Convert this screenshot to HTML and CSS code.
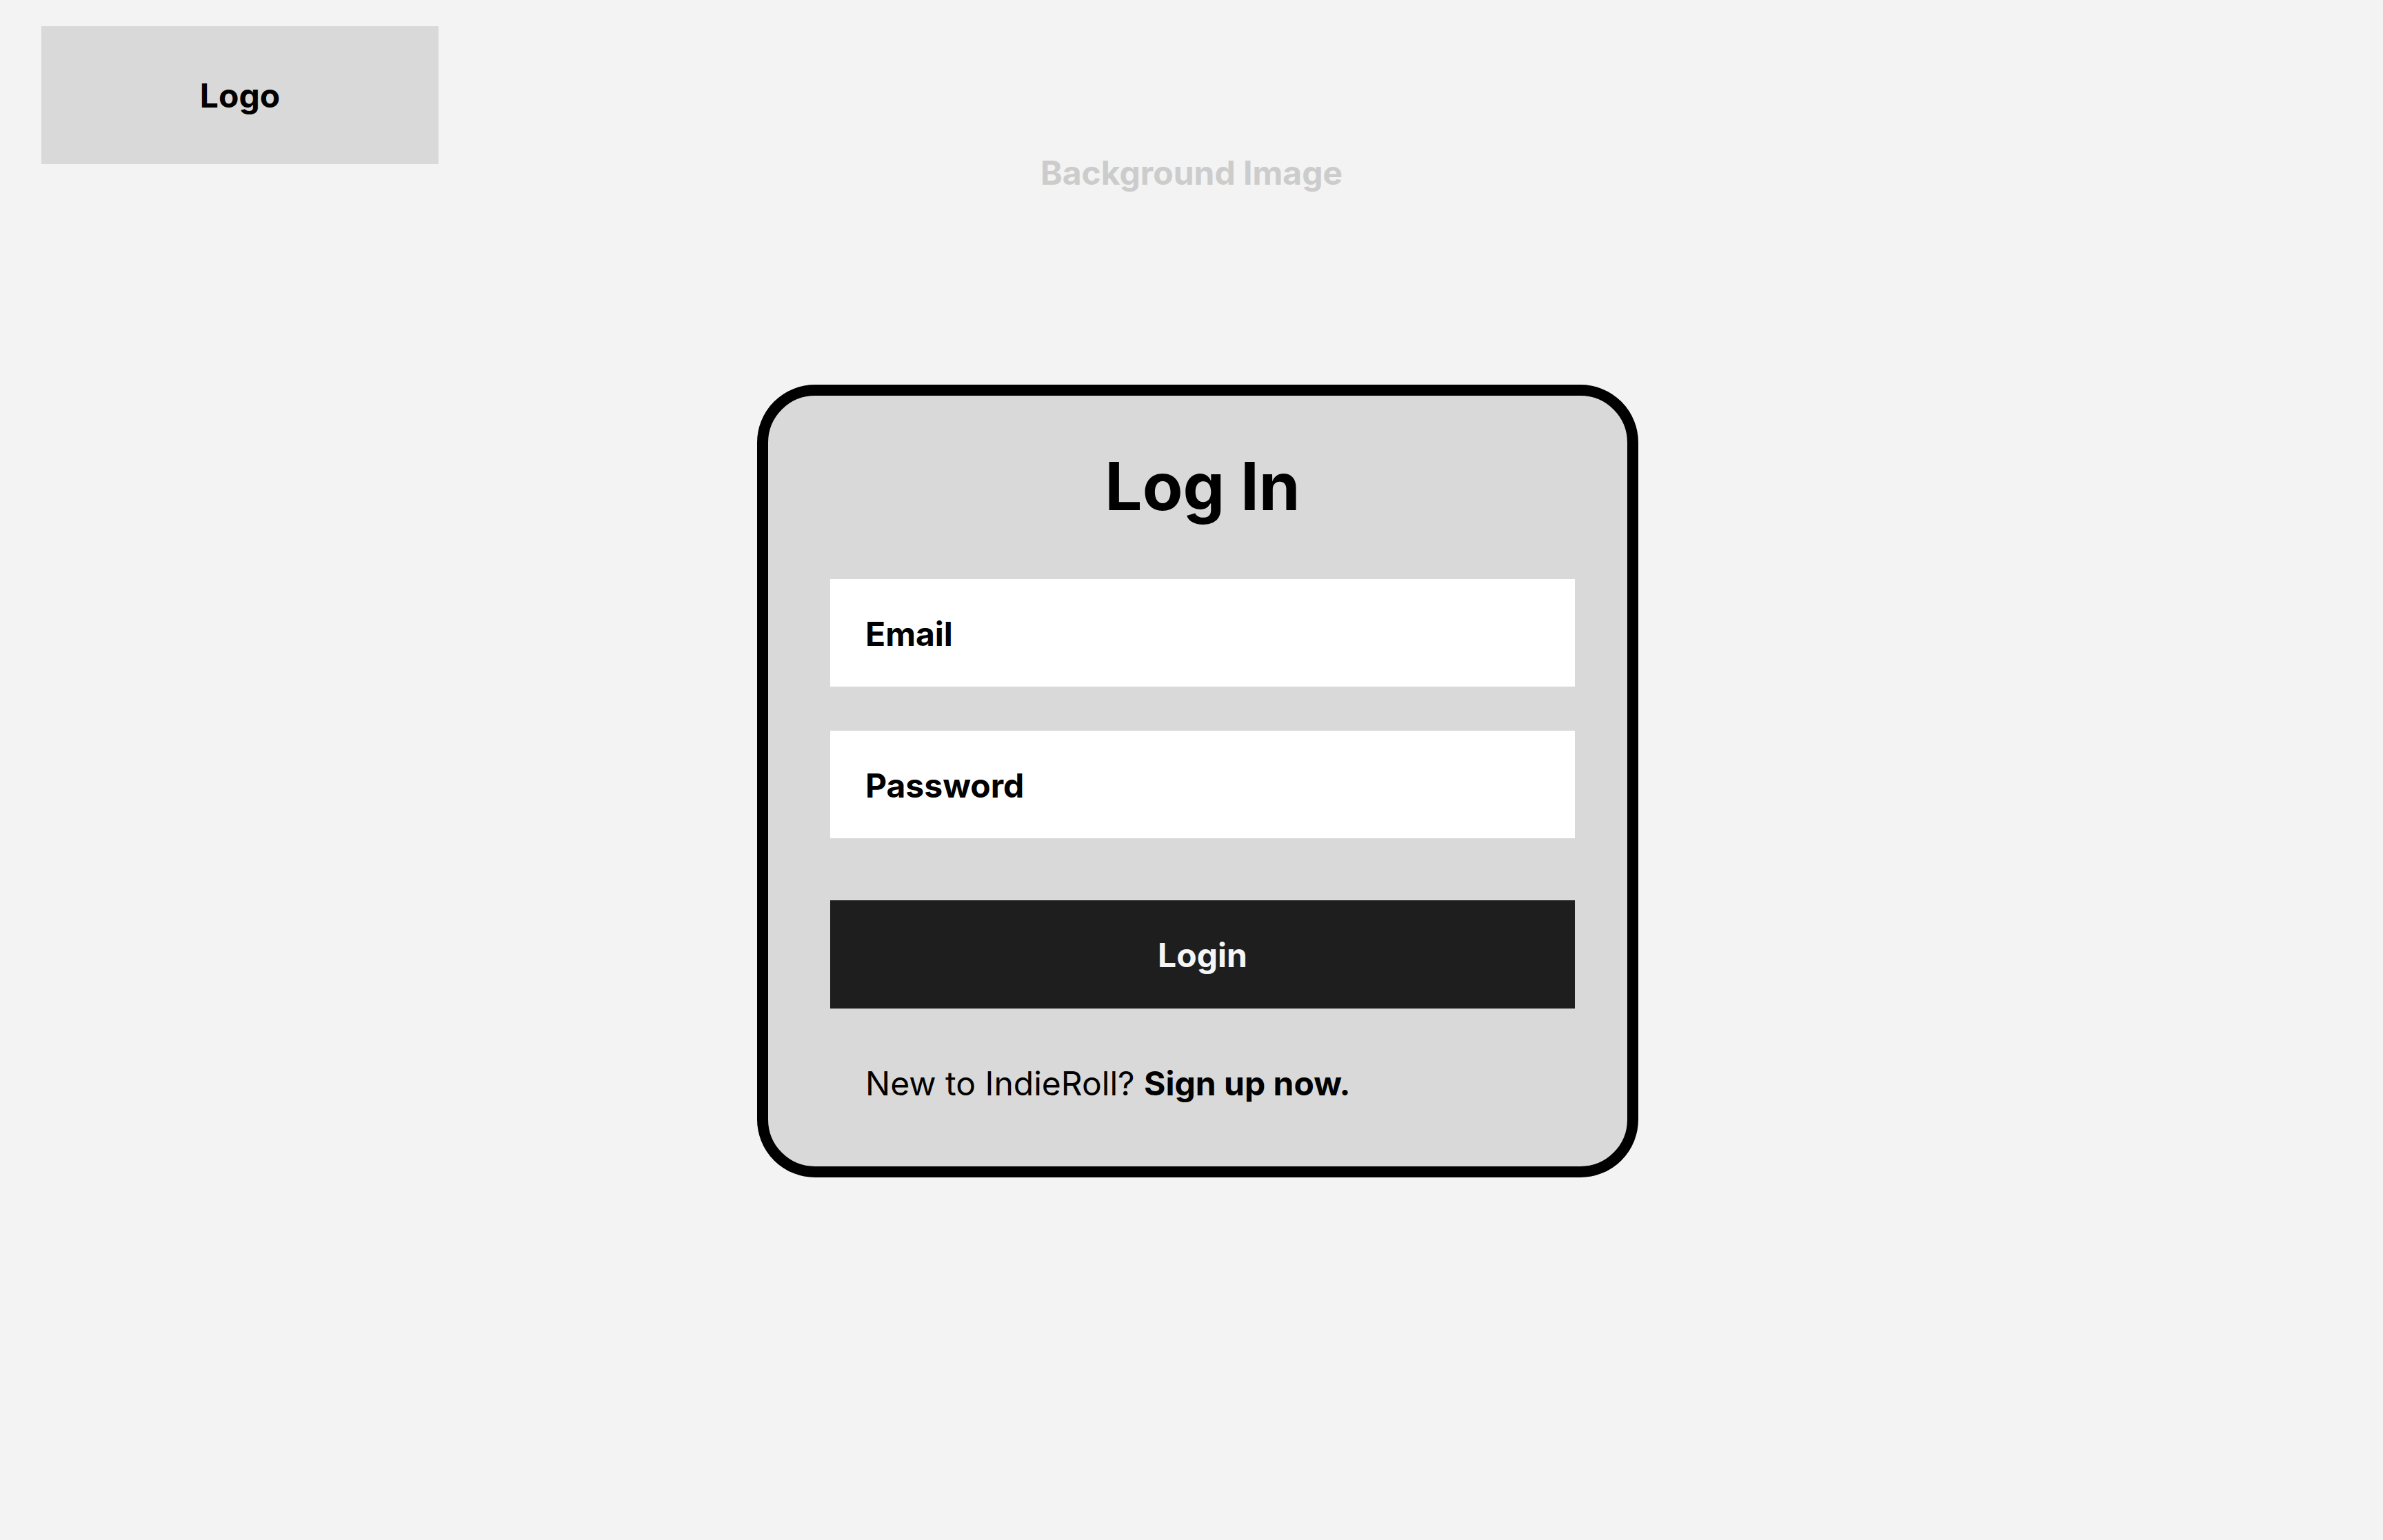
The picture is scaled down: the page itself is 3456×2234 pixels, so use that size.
FILE: index.html
```html
<!DOCTYPE html>
<html lang="en">
<head>
<meta charset="utf-8">
<title>Log In</title>
<link rel="stylesheet" href="styles.css">
</head>
<body>
<div class="page">
  <div class="bg-label">Background Image</div>
  <header class="top">
    <div class="logo">Logo</div>
  </header>
  <main class="stage">
    <section class="card">
      <h1 class="title">Log In</h1>
      <div class="field field-email">Email</div>
      <div class="field field-password">Password</div>
      <button class="login-btn" type="button">Login</button>
      <p class="signup">New to IndieRoll? <strong>Sign up now.</strong></p>
    </section>
  </main>
</div>
</body>
</html>
```

FILE: styles.css
```css
* { box-sizing: border-box; }

html, body {
  margin: 0;
  padding: 0;
}

body {
  background: #f3f3f3;
  font-family: Inter, "Noto Sans", "Liberation Sans", sans-serif;
  color: #000;
}

.page {
  position: relative;
  width: 3456px;
  min-height: 2234px;
}

.bg-label {
  position: absolute;
  top: 221px;
  left: 0;
  right: 0;
  text-align: center;
  font-size: 48px;
  font-weight: 700;
  color: #cccccc;
  line-height: normal;
}

.top {
  padding: 38px 0 0 60px;
}

.logo {
  width: 576px;
  height: 200px;
  background: #d9d9d9;
  display: flex;
  align-items: center;
  justify-content: center;
  font-size: 48px;
  font-weight: 700;
}

.stage {
  padding: 320px 0 0 1098px;
}

.card {
  width: 1278px;
  height: 1150px;
  border: 16px solid #000;
  border-radius: 84px;
  background: #d9d9d9;
  padding: 73px 76px 0 90px;
  display: flex;
  flex-direction: column;
}

.title {
  margin: 0 0 77px;
  font-size: 96px;
  font-weight: 700;
  line-height: 116px;
  text-align: center;
}

.field {
  height: 156px;
  background: #fff;
  display: flex;
  align-items: center;
  padding: 3px 0 0 51px;
  font-size: 48px;
  font-weight: 700;
}

.field-email {
  margin-bottom: 64px;
}

.field-password {
  margin-bottom: 90px;
}

.login-btn {
  height: 157px;
  border: 0;
  border-radius: 0;
  background: #1e1e1e;
  color: #f5f5f5;
  font-family: inherit;
  font-size: 48px;
  font-weight: 700;
  padding: 2px 0 0;
  margin: 0 0 77px;
}

.signup {
  margin: 0;
  padding: 2px 0 0 51px;
  font-size: 48px;
  font-weight: 400;
  line-height: normal;
}

.signup strong {
  font-weight: 700;
}
```
